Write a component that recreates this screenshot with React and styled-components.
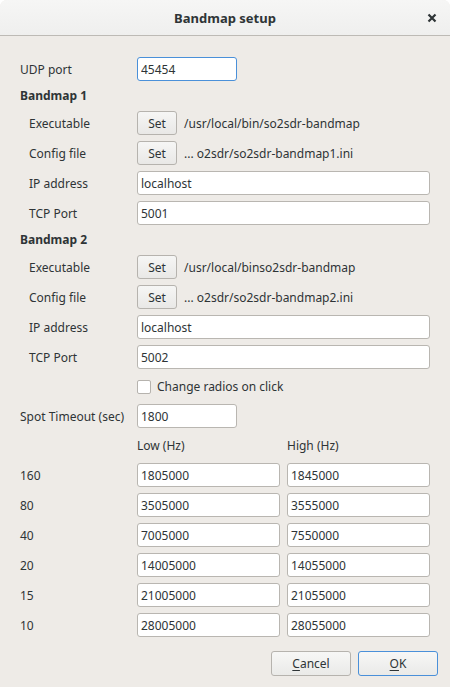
import React from 'react';
import styled, { createGlobalStyle } from 'styled-components';

const GlobalStyle = createGlobalStyle`
    html, body {
        margin: 0;
        padding: 0;
        background: #ffffff;
    }
    * {
        box-sizing: border-box;
    }
`;

const bandRows = [
    { band: '160', low: '1805000', high: '1845000' },
    { band: '80', low: '3505000', high: '3555000' },
    { band: '40', low: '7005000', high: '7550000' },
    { band: '20', low: '14005000', high: '14055000' },
    { band: '15', low: '21005000', high: '21055000' },
    { band: '10', low: '28005000', high: '28055000' },
];

const bandmaps = [
    {
        title: 'Bandmap 1',
        exe: '/usr/local/bin/so2sdr-bandmap',
        ini: '... o2sdr/so2sdr-bandmap1.ini',
        tcp: '5001',
    },
    {
        title: 'Bandmap 2',
        exe: '/usr/local/binso2sdr-bandmap',
        ini: '... o2sdr/so2sdr-bandmap2.ini',
        tcp: '5002',
    },
];

function CloseIcon() {
    return (
        <svg width="10" height="10" viewBox="0 0 10 10">
            <path d="M1.5 1.5 L8.5 8.5 M8.5 1.5 L1.5 8.5" stroke="#2e3436" strokeWidth="2.2" strokeLinecap="butt" />
        </svg>
    );
}

function BandmapGroup({ data }) {
    return (
        <>
            <Heading>{data.title}</Heading>
            <Row>
                <Label $indent>Executable</Label>
                <FileCell>
                    <SetButton>Set</SetButton>
                    <Path>{data.exe}</Path>
                </FileCell>
            </Row>
            <Row>
                <Label $indent>Config file</Label>
                <FileCell>
                    <SetButton>Set</SetButton>
                    <Path>{data.ini}</Path>
                </FileCell>
            </Row>
            <Row>
                <Label $indent>IP address</Label>
                <Input defaultValue="localhost" />
            </Row>
            <Row>
                <Label $indent>TCP Port</Label>
                <Input defaultValue={data.tcp} />
            </Row>
        </>
    );
}

export default function App() {
    return (
        <>
            <GlobalStyle />
            <Window>
                <TitleBar>
                    <Title>Bandmap setup</Title>
                    <CloseButton>
                        <CloseIcon />
                    </CloseButton>
                </TitleBar>
                <Body>
                    <Form>
                        <Row>
                            <Label>UDP port</Label>
                            <Input defaultValue="45454" $width="100px" $focused />
                        </Row>
                        {bandmaps.map((b) => (
                            <BandmapGroup key={b.title} data={b} />
                        ))}
                        <CheckRow>
                            <span />
                            <CheckLabel>
                                <CheckBox />
                                Change radios on click
                            </CheckLabel>
                        </CheckRow>
                        <Row>
                            <Label>Spot Timeout (sec)</Label>
                            <Input defaultValue="1800" $width="100px" />
                        </Row>
                        <HeaderRow>
                            <span />
                            <Pair>
                                <ColHead>Low (Hz)</ColHead>
                                <ColHead>High (Hz)</ColHead>
                            </Pair>
                        </HeaderRow>
                        {bandRows.map((r) => (
                            <Row key={r.band}>
                                <Label>{r.band}</Label>
                                <Pair>
                                    <Input defaultValue={r.low} />
                                    <Input defaultValue={r.high} />
                                </Pair>
                            </Row>
                        ))}
                    </Form>
                    <ButtonBar>
                        <DialogButton>
                            <u>C</u>ancel
                        </DialogButton>
                        <DialogButton $default>
                            <u>O</u>K
                        </DialogButton>
                    </ButtonBar>
                </Body>
            </Window>
        </>
    );
}

const Window = styled.div`
    display: flex;
    flex-direction: column;
    width: 450px;
    height: 687px;
    border-radius: 7px 7px 0 0;
    overflow: hidden;
    background-color: #eeebe7;
    font-family: 'Noto Sans', 'Open Sans', sans-serif;
    font-size: 12px;
    color: #2e3436;
`;

const TitleBar = styled.div`
    position: relative;
    display: flex;
    align-items: center;
    justify-content: center;
    height: 36px;
    flex-shrink: 0;
    background: linear-gradient(#f6f6f5, #efefee);
    border-bottom: 1px solid #bdbab5;
`;

const Title = styled.div`
    font-size: 13px;
    font-weight: bold;
    color: #2e3436;
    padding-top: 1px;
`;

const CloseButton = styled.div`
    position: absolute;
    right: 13px;
    top: 13px;
    display: flex;
    width: 10px;
    height: 10px;
`;

const Body = styled.div`
    display: flex;
    flex-direction: column;
    flex: 1;
`;

const Form = styled.div`
    display: flex;
    flex-direction: column;
    gap: 6px;
    padding: 21px 20px 0 20px;
`;

const Row = styled.div`
    display: grid;
    grid-template-columns: 117px 1fr;
    align-items: center;
    height: 24px;
`;

const CheckRow = styled(Row)`
    height: 23px;
`;

const HeaderRow = styled(Row)`
    height: 23px;
`;

const Label = styled.div`
    padding-left: ${(p) => (p.$indent ? '9px' : '0')};
    white-space: nowrap;
`;

const Heading = styled.div`
    height: 18px;
    line-height: 18px;
    font-weight: bold;
`;

const Input = styled.input`
    width: ${(p) => p.$width || '100%'};
    height: 24px;
    padding: 0 3px;
    border: 1px solid ${(p) => (p.$focused ? '#4a90d9' : '#b9b6b1')};
    border-radius: 3px;
    background: #ffffff;
    font-family: inherit;
    font-size: 12px;
    color: #2e3436;
    outline: none;
`;

const FileCell = styled.div`
    display: flex;
    align-items: center;
    gap: 7px;
`;

const SetButton = styled.button`
    width: 40px;
    height: 24px;
    padding: 0;
    border: 1px solid #b6b3ae;
    border-radius: 3px;
    background: linear-gradient(#f6f6f5, #e9e8e6);
    font-family: inherit;
    font-size: 12px;
    color: #2e3436;
`;

const Path = styled.span`
    white-space: nowrap;
`;

const Pair = styled.div`
    display: grid;
    grid-template-columns: 1fr 1fr;
    column-gap: 7px;
`;

const ColHead = styled.div``;

const CheckLabel = styled.label`
    display: flex;
    align-items: center;
    gap: 6px;
`;

const CheckBox = styled.span`
    display: inline-block;
    width: 14px;
    height: 14px;
    border: 1px solid #b6b3ae;
    border-radius: 2px;
    background: #ffffff;
`;

const ButtonBar = styled.div`
    display: flex;
    justify-content: flex-end;
    gap: 7px;
    padding: 14px 12px 0 0;
`;

const DialogButton = styled.button`
    width: 80px;
    height: 25px;
    padding: 0;
    border: 1px solid ${(p) => (p.$default ? '#4a90d9' : '#b6b3ae')};
    border-radius: 3px;
    background: linear-gradient(#f7f7f6, #eaeae8);
    font-family: inherit;
    font-size: 12px;
    color: #2e3436;

    u {
        text-underline-offset: 2px;
    }
`;
